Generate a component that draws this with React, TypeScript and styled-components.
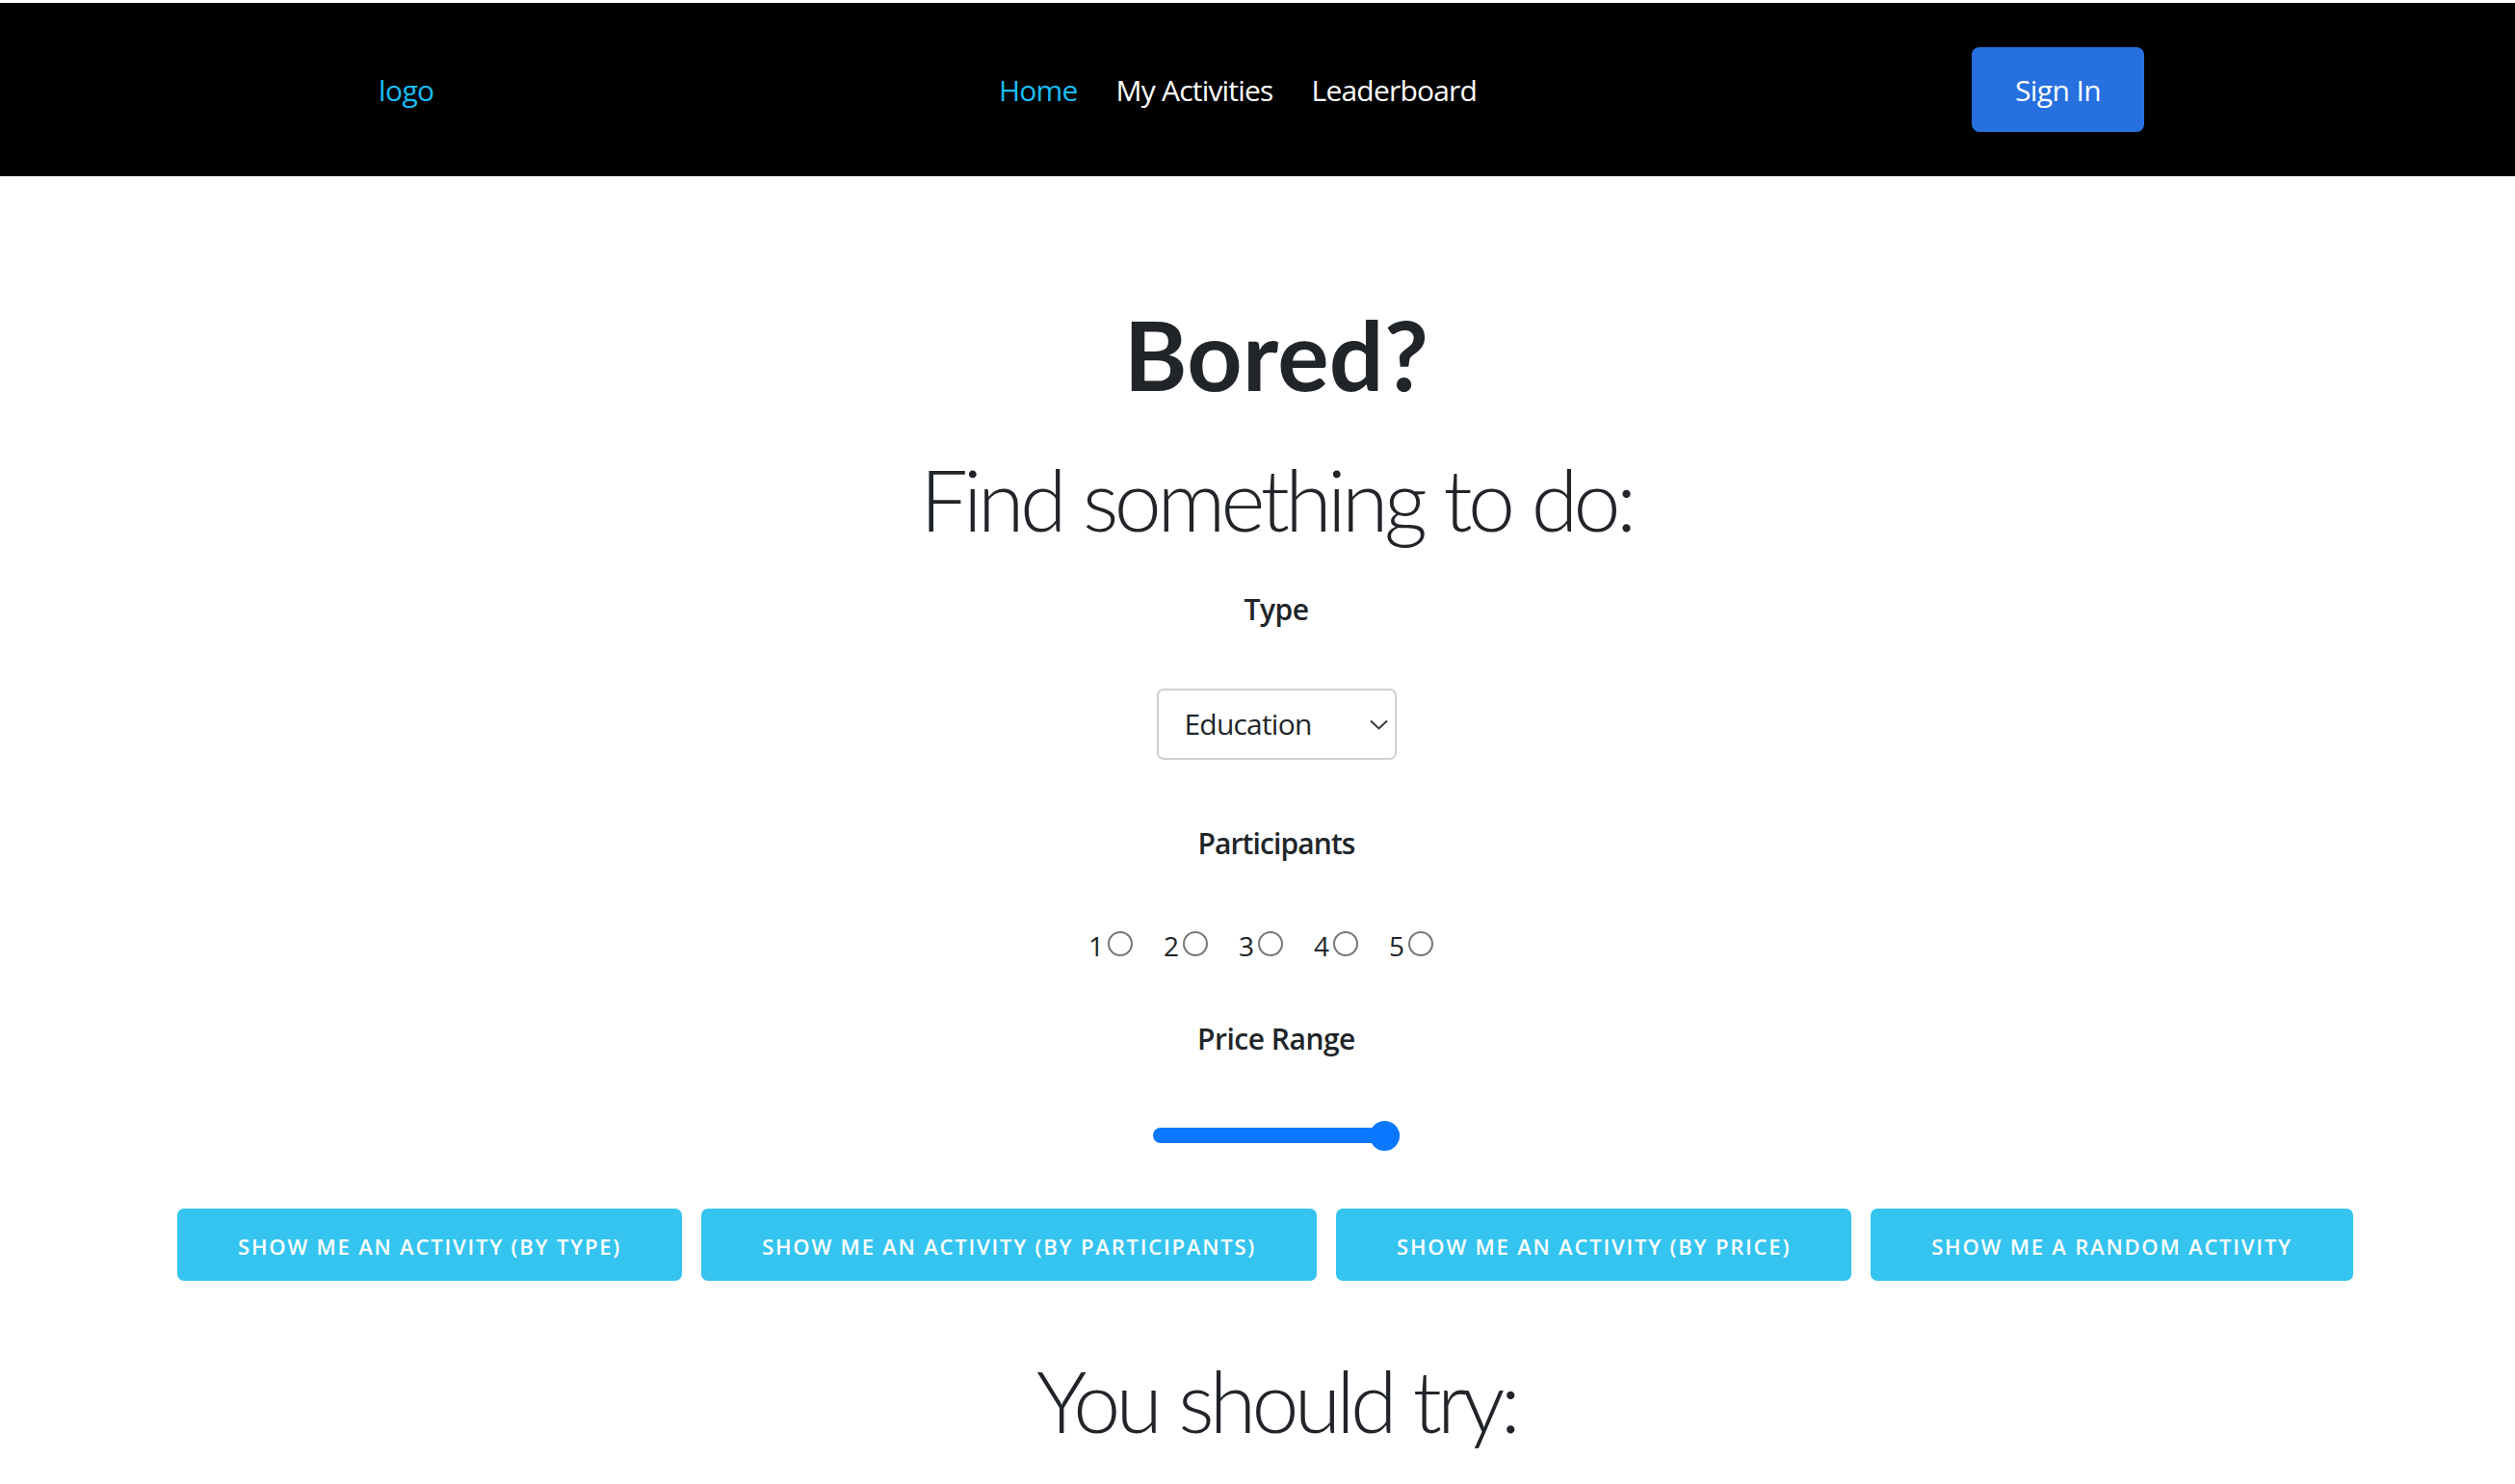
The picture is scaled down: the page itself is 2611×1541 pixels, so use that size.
import React, { useState } from "react";
import styled, { createGlobalStyle } from "styled-components";

const GlobalStyle = createGlobalStyle`
  html, body { margin: 0; padding: 0; background: #ffffff; }
  body { font-family: "Open Sans", "Noto Sans", sans-serif; color: #212529; }
  * { box-sizing: border-box; }
`;

const Page = styled.div`
  padding-top: 3px;
  min-height: 1541px;
  background: #ffffff;
`;

const NavBar = styled.nav`
  height: 180px;
  background: #000000;
  display: flex;
  align-items: center;
  padding: 0 385px 0 393px;
  font-size: 30px;
`;

const Logo = styled.a`
  width: 644px;
  color: #18bdf7;
  text-decoration: none;
  letter-spacing: -0.6px;
`;

const NavLinks = styled.div`
  display: flex;
  gap: 40px;
`;

const NavLink = styled.a<{ $active?: boolean }>`
  color: ${(p) => (p.$active ? "#18bdf7" : "#ffffff")};
  text-decoration: none;
  letter-spacing: -0.8px;
`;

const SignIn = styled.button`
  margin-left: auto;
  width: 179px;
  height: 88px;
  border: none;
  border-radius: 8px;
  background: #2670e0;
  color: #ffffff;
  font-family: inherit;
  font-size: 30px;
  letter-spacing: -0.6px;
`;

const Hero = styled.section`
  display: flex;
  flex-direction: column;
  align-items: center;
  padding-left: 39px;
  padding-top: 124px;
`;

const Title = styled.h1`
  margin: 0;
  font-family: Lato, "Open Sans", sans-serif;
  font-size: 100px;
  line-height: 1.2;
  font-weight: 700;
  letter-spacing: 0.3px;
`;

const Subtitle = styled.h2`
  margin: 39px 0 0;
  font-family: Lato, "Open Sans", sans-serif;
  font-size: 88px;
  line-height: 1.2;
  font-weight: 300;
  letter-spacing: -4.6px;
  word-spacing: 2px;
`;

const FieldLabel = styled.div<{ $gap: number; $spacing?: number }>`
  margin-top: ${(p) => p.$gap}px;
  font-size: 30px;
  line-height: 1.5;
  font-weight: 600;
  letter-spacing: ${(p) => p.$spacing ?? -0.5}px;
`;

const SelectWrap = styled.div`
  position: relative;
  margin-top: 60px;
  width: 249px;
  height: 74px;
`;

const Select = styled.select`
  appearance: none;
  width: 100%;
  height: 100%;
  border: 2px solid #d0d0d0;
  border-radius: 7px;
  background: #ffffff;
  padding: 0 0 0 27px;
  font-family: inherit;
  font-size: 30px;
  color: #212529;
  letter-spacing: -0.8px;
`;

const Chevron = styled.svg`
  position: absolute;
  right: 9px;
  top: 32px;
  width: 19px;
  height: 11px;
  pointer-events: none;
`;

const RadioRow = styled.div`
  margin-top: 63px;
  display: flex;
  align-items: center;
  height: 42px;
`;

const RadioLabel = styled.label`
  display: flex;
  align-items: center;
  gap: 4px;
  margin-right: 32px;
  font-size: 28px;
  line-height: 1.5;
  color: #212529;
`;

const Radio = styled.input`
  appearance: none;
  margin: 0;
  width: 26px;
  height: 26px;
  border: 2px solid #767676;
  border-radius: 50%;
  background: #ffffff;
  position: relative;
  top: -2px;
`;

const Range = styled.input`
  appearance: none;
  -webkit-appearance: none;
  margin: 63px 0 0;
  width: 256px;
  height: 31px;
  background: transparent;
  &::-webkit-slider-runnable-track {
    height: 16px;
    border-radius: 8px;
    background: #0a77ff;
  }
  &::-webkit-slider-thumb {
    -webkit-appearance: none;
    width: 31px;
    height: 31px;
    border-radius: 50%;
    background: #0a77ff;
    margin-top: -7.5px;
    border: none;
  }
`;

const ButtonRow = styled.div`
  display: flex;
  justify-content: center;
  gap: 20px;
  padding-left: 16px;
  margin-top: 60px;
`;

const ActionButton = styled.button`
  height: 75px;
  padding: 3px 63px 0;
  border: none;
  border-radius: 7px;
  background: #35c4f0;
  color: #ffffff;
  font-family: inherit;
  font-size: 22px;
  font-weight: 600;
  letter-spacing: 1.8px;
  text-transform: uppercase;
  white-space: nowrap;
`;

const Result = styled.section`
  display: flex;
  justify-content: center;
  padding-left: 39px;
  margin-top: 72px;
`;

const ResultTitle = styled.h2`
  margin: 0;
  font-family: Lato, "Open Sans", sans-serif;
  font-size: 88px;
  line-height: 1.2;
  font-weight: 300;
  letter-spacing: -4.8px;
  word-spacing: 2px;
`;

export default function App() {
  const [type, setType] = useState("education");
  const [price, setPrice] = useState(1);
  return (
    <>
      <GlobalStyle />
      <Page>
        <NavBar>
          <Logo href="#">logo</Logo>
          <NavLinks>
            <NavLink href="#" $active>Home</NavLink>
            <NavLink href="#">My Activities</NavLink>
            <NavLink href="#">Leaderboard</NavLink>
          </NavLinks>
          <SignIn>Sign In</SignIn>
        </NavBar>
        <Hero>
          <Title>Bored?</Title>
          <Subtitle>Find something to do:</Subtitle>
          <FieldLabel $gap={38}>Type</FieldLabel>
          <SelectWrap>
            <Select value={type} onChange={(e) => setType(e.target.value)}>
              <option value="education">Education</option>
              <option value="recreational">Recreational</option>
              <option value="social">Social</option>
              <option value="diy">DIY</option>
              <option value="charity">Charity</option>
              <option value="cooking">Cooking</option>
              <option value="relaxation">Relaxation</option>
              <option value="music">Music</option>
              <option value="busywork">Busywork</option>
            </Select>
            <Chevron viewBox="0 0 19 11">
              <path d="M1 1.5 L9.5 9.5 L18 1.5" fill="none" stroke="#343a40" strokeWidth="2" />
            </Chevron>
          </SelectWrap>
          <FieldLabel $gap={64} $spacing={-0.9}>Participants</FieldLabel>
          <RadioRow>
            {[1, 2, 3, 4, 5].map((n) => (
              <RadioLabel key={n}>
                {n}
                <Radio type="radio" name="participants" value={n} />
              </RadioLabel>
            ))}
          </RadioRow>
          <FieldLabel $gap={53}>Price Range</FieldLabel>
          <Range
            type="range"
            min={0}
            max={1}
            step={0.1}
            value={price}
            onChange={(e) => setPrice(Number(e.target.value))}
          />
        </Hero>
        <ButtonRow>
          <ActionButton>Show me an activity (by type)</ActionButton>
          <ActionButton>Show me an activity (by participants)</ActionButton>
          <ActionButton>Show me an activity (by price)</ActionButton>
          <ActionButton>Show me a random activity</ActionButton>
        </ButtonRow>
        <Result>
          <ResultTitle>You should try:</ResultTitle>
        </Result>
      </Page>
    </>
  );
}
